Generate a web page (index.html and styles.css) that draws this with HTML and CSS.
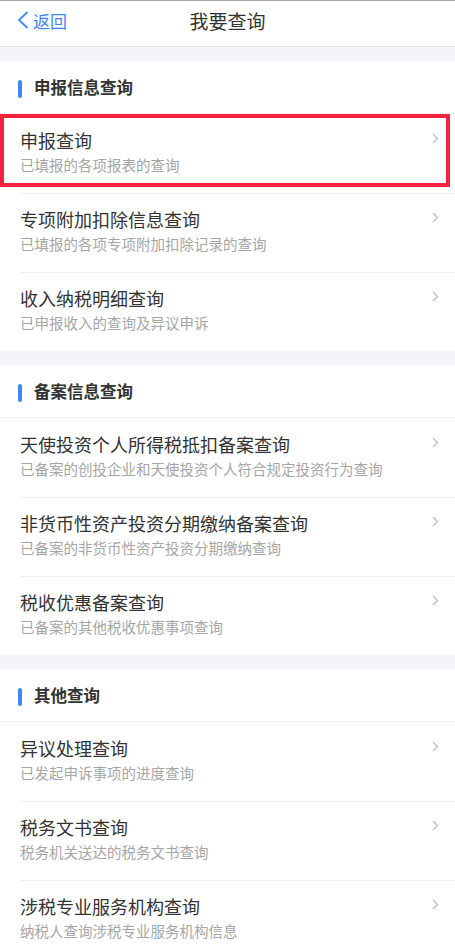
FILE: index.html
```html
<!DOCTYPE html>
<html lang="zh">
<head>
  <meta charset="UTF-8">
  <meta name="viewport" content="width=device-width, initial-scale=1.0">
  <title>我要查询</title>
  <link rel="stylesheet" href="styles.css">
</head>
<body>
<header class="nav_bar">
  <div class="nav_row">
    <a class="back_btn">
      <svg width="12" height="18" viewBox="0 0 12 18"><path d="M10.5 1 L2 9 L10.5 17" fill="none" stroke="#3f86f2" stroke-width="1.8"/></svg>
      <span>返回</span>
    </a>
    <div class="nav_title">我要查询</div>
    <div></div>
  </div>
</header>

<section class="group">
  <div class="group_title"><i class="bar"></i>申报信息查询</div>
  <div class="item marked">
    <div class="item_text">
      <div class="item_name">申报查询</div>
      <div class="item_desc">已填报的各项报表的查询</div>
    </div>
    <svg class="arrow" width="7" height="11" viewBox="0 0 7 11"><path d="M1 1 L5.5 5.5 L1 10" fill="none" stroke="#c4c4c8" stroke-width="1.5"/></svg>
    <div class="mark_box"></div>
  </div>
  <div class="item">
    <div class="item_text">
      <div class="item_name">专项附加扣除信息查询</div>
      <div class="item_desc">已填报的各项专项附加扣除记录的查询</div>
    </div>
    <svg class="arrow" width="7" height="11" viewBox="0 0 7 11"><path d="M1 1 L5.5 5.5 L1 10" fill="none" stroke="#c4c4c8" stroke-width="1.5"/></svg>
  </div>
  <div class="item">
    <div class="item_text">
      <div class="item_name">收入纳税明细查询</div>
      <div class="item_desc">已申报收入的查询及异议申诉</div>
    </div>
    <svg class="arrow" width="7" height="11" viewBox="0 0 7 11"><path d="M1 1 L5.5 5.5 L1 10" fill="none" stroke="#c4c4c8" stroke-width="1.5"/></svg>
  </div>
</section>

<section class="group">
  <div class="group_title"><i class="bar"></i>备案信息查询</div>
  <div class="item">
    <div class="item_text">
      <div class="item_name">天使投资个人所得税抵扣备案查询</div>
      <div class="item_desc">已备案的创投企业和天使投资个人符合规定投资行为查询</div>
    </div>
    <svg class="arrow" width="7" height="11" viewBox="0 0 7 11"><path d="M1 1 L5.5 5.5 L1 10" fill="none" stroke="#c4c4c8" stroke-width="1.5"/></svg>
  </div>
  <div class="item">
    <div class="item_text">
      <div class="item_name">非货币性资产投资分期缴纳备案查询</div>
      <div class="item_desc">已备案的非货币性资产投资分期缴纳查询</div>
    </div>
    <svg class="arrow" width="7" height="11" viewBox="0 0 7 11"><path d="M1 1 L5.5 5.5 L1 10" fill="none" stroke="#c4c4c8" stroke-width="1.5"/></svg>
  </div>
  <div class="item">
    <div class="item_text">
      <div class="item_name">税收优惠备案查询</div>
      <div class="item_desc">已备案的其他税收优惠事项查询</div>
    </div>
    <svg class="arrow" width="7" height="11" viewBox="0 0 7 11"><path d="M1 1 L5.5 5.5 L1 10" fill="none" stroke="#c4c4c8" stroke-width="1.5"/></svg>
  </div>
</section>

<section class="group">
  <div class="group_title"><i class="bar"></i>其他查询</div>
  <div class="item">
    <div class="item_text">
      <div class="item_name">异议处理查询</div>
      <div class="item_desc">已发起申诉事项的进度查询</div>
    </div>
    <svg class="arrow" width="7" height="11" viewBox="0 0 7 11"><path d="M1 1 L5.5 5.5 L1 10" fill="none" stroke="#c4c4c8" stroke-width="1.5"/></svg>
  </div>
  <div class="item">
    <div class="item_text">
      <div class="item_name">税务文书查询</div>
      <div class="item_desc">税务机关送达的税务文书查询</div>
    </div>
    <svg class="arrow" width="7" height="11" viewBox="0 0 7 11"><path d="M1 1 L5.5 5.5 L1 10" fill="none" stroke="#c4c4c8" stroke-width="1.5"/></svg>
  </div>
  <div class="item">
    <div class="item_text">
      <div class="item_name">涉税专业服务机构查询</div>
      <div class="item_desc">纳税人查询涉税专业服务机构信息</div>
    </div>
    <svg class="arrow" width="7" height="11" viewBox="0 0 7 11"><path d="M1 1 L5.5 5.5 L1 10" fill="none" stroke="#c4c4c8" stroke-width="1.5"/></svg>
  </div>
</section>
</body>
</html>
```

FILE: styles.css
```css
body {
    margin: 0;
    background: #f4f5f8;
    font-family: "Noto Sans CJK SC", "Noto Sans", sans-serif;
    color: #333;
}

/* 顶部导航 */
.nav_bar {
    background: #fff;
    border-top: 1px solid #a8a8a8;
    border-bottom: 1px solid #e4e4e8;
    padding-bottom: 7px;
}
.nav_row {
    height: 38px;
    display: grid;
    grid-template-columns: 1fr auto 1fr;
    align-items: center;
}
.back_btn {
    display: flex;
    align-items: center;
    gap: 4px;
    padding-left: 17px;
    color: #3f86f2;
    font-size: 17px;
}
.nav_title {
    font-size: 19px;
    color: #333;
}

/* 分组 */
.group {
    background: #fff;
    margin-top: 14px;
}
.group_title {
    height: 52px;
    display: flex;
    align-items: center;
    padding-left: 18px;
    font-size: 16.5px;
    font-weight: bold;
    color: #333;
    border-bottom: 1px solid #efeff2;
}
.bar {
    width: 4px;
    height: 18px;
    border-radius: 2px;
    background: #4285f4;
    margin-right: 12px;
    margin-top: 3px;
}

/* 列表项 */
.item {
    position: relative;
    height: 79px;
    box-sizing: border-box;
    display: flex;
    align-items: flex-start;
    padding: 14px 16px 0 20px;
}
.item + .item::before {
    content: "";
    position: absolute;
    left: 20px;
    right: 0;
    top: 0;
    border-top: 1px solid #eeeef0;
}
.item_text {
    flex: 1;
}
.item_name {
    font-size: 18px;
    line-height: 24px;
    color: #333;
}
.item_desc {
    font-size: 14.5px;
    line-height: 20px;
    margin-top: 3px;
    color: #a6a6a6;
}
.arrow {
    flex-shrink: 0;
    margin-top: 5px;
}

/* 红框标记 */
.mark_box {
    position: absolute;
    top: 0;
    left: 0;
    right: 5px;
    bottom: 6px;
    border: 4px solid #f5223f;
}
```
